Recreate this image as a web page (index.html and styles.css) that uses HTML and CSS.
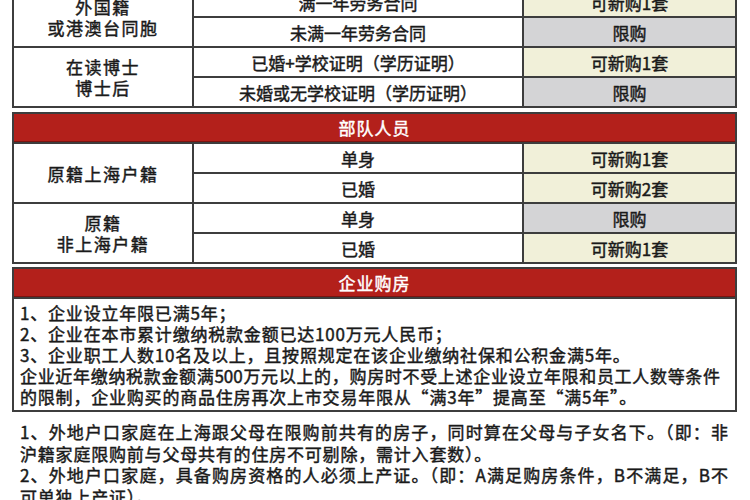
FILE: index.html
```html
<!DOCTYPE html>
<html lang="zh-CN">
<head>
<meta charset="utf-8">
<title>购房政策</title>
<link rel="stylesheet" href="styles.css">
</head>
<body>
<div class="page">
  <div class="grid sec-top">
    <div class="cell c1 span2">外国籍<br>或港澳台同胞</div>
    <div class="cell">满一年劳务合同</div>
    <div class="cell yes">可新购1套</div>
    <div class="cell">未满一年劳务合同</div>
    <div class="cell no">限购</div>
    <div class="cell c1 span2">在读博士<br>博士后</div>
    <div class="cell">已婚+学校证明（学历证明）</div>
    <div class="cell yes">可新购1套</div>
    <div class="cell">未婚或无学校证明（学历证明）</div>
    <div class="cell no">限购</div>
  </div>

  <div class="grid sec-army">
    <div class="head">部队人员</div>
    <div class="cell c1 span2">原籍上海户籍</div>
    <div class="cell">单身</div>
    <div class="cell yes">可新购1套</div>
    <div class="cell">已婚</div>
    <div class="cell yes">可新购2套</div>
    <div class="cell c1 span2">原籍<br>非上海户籍</div>
    <div class="cell">单身</div>
    <div class="cell no">限购</div>
    <div class="cell">已婚</div>
    <div class="cell yes">可新购1套</div>
  </div>

  <div class="box">
    <div class="head">企业购房</div>
    <div class="box-body">
      <div class="ln">1、企业设立年限已满5年；</div>
      <div class="ln">2、企业在本市累计缴纳税款金额已达100万元人民币；</div>
      <div class="ln">3、企业职工人数10名及以上，且按照规定在该企业缴纳社保和公积金满5年。</div>
      <div class="ln j">企业近年缴纳税款金额满500万元以上的，购房时不受上述企业设立年限和员工人数等条件</div>
      <div class="ln">的限制，企业购买的商品住房再次上市交易年限从“满3年”提高至“满5年”。</div>
    </div>
  </div>

  <div class="notes">
    <div class="ln j">1、外地户口家庭在上海跟父母在限购前共有的房子，同时算在父母与子女名下。（即：非</div>
    <div class="ln">沪籍家庭限购前与父母共有的住房不可剔除，需计入套数）。</div>
    <div class="ln j">2、外地户口家庭，具备购房资格的人必须上产证。（即：A满足购房条件，B不满足，B不</div>
    <div class="ln">可单独上产证）。</div>
  </div>
</div>
</body>
</html>
```

FILE: styles.css
```css
html, body {
  margin: 0;
  padding: 0;
  background: #ffffff;
}

body {
  width: 750px;
  height: 500px;
  overflow: hidden;
  font-family: "Noto Sans CJK SC", "Noto Sans", sans-serif;
  color: #1a1a1a;
  font-size: 17px;
  font-weight: 400;
  -webkit-text-stroke: 0.45px #1a1a1a;
}

.page {
  display: flex;
  flex-direction: column;
}

.grid {
  display: grid;
  grid-template-columns: 178px 328px 211px;
  grid-auto-rows: 28px;
  gap: 2px;
  padding: 2px;
  margin-left: 12px;
  width: 721px;
  background: #3d3d3d;
}

.sec-top {
  margin-top: -14px;
}

.sec-army {
  margin-top: 4px;
}

.cell {
  background: #ffffff;
  display: flex;
  align-items: center;
  justify-content: center;
  text-align: center;
  line-height: 21px;
  white-space: nowrap;
}

.c1 {
  letter-spacing: 1.5px;
}

.span2 {
  grid-row: span 2;
}

.yes {
  background: #f1f0d9;
}

.no {
  background: #d4d4d6;
}

.head {
  grid-column: 1 / -1;
  background: #b3201b;
  color: #ffffff;
  -webkit-text-stroke: 0.45px #ffffff;
  display: flex;
  align-items: center;
  justify-content: center;
  letter-spacing: 1px;
  border-bottom: 1px solid #7a1410;
  box-sizing: border-box;
}

.box {
  margin-top: 3px;
  margin-left: 12px;
  width: 721px;
  padding: 2px;
  background: #3d3d3d;
  display: grid;
  grid-template-rows: 28px auto;
  gap: 2px;
}

.box-body {
  background: #ffffff;
  padding: 3px 15px 3px 6px;
  line-height: 21px;
  letter-spacing: 0.8px;
}

.ln {
  white-space: nowrap;
}

.j {
  text-align: justify;
  text-align-last: justify;
  letter-spacing: 0;
}

.notes {
  margin-top: 9px;
  margin-left: 20px;
  width: 708px;
  line-height: 21.5px;
  letter-spacing: 0.8px;
}
```
